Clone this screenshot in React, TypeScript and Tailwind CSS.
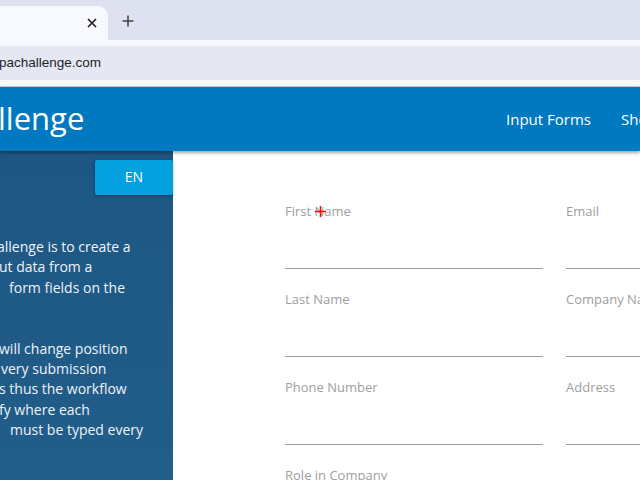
import React from "react";

const font = { fontFamily: '"Open Sans", "Noto Sans", sans-serif' };

function Field({ label }: { label: string }) {
  return (
    <div className="mb-[20px]">
      <div className="h-[20px] text-[13px] leading-[20px] text-[#9e9e9e]">{label}</div>
      <div className="h-[48px] border-b border-[#9e9e9e]" />
    </div>
  );
}

export default function App() {
  return (
    <div className="relative w-[640px] h-[480px] overflow-hidden bg-white" style={font}>
      {/* tab strip */}
      <div className="flex h-[40px] bg-[#dee1ef]">
        <div className="mt-[6px] flex h-[34px] w-[108px] items-center justify-end rounded-tr-[10px] bg-[#f8f9fe] pr-[10px]">
          <svg width="10" height="10" viewBox="0 0 10 10" className="mr-[1px]">
            <path d="M1 1 L9 9 M9 1 L1 9" stroke="#1f1f1f" strokeWidth="1.6" />
          </svg>
        </div>
        <div className="ml-[14px] flex items-center pt-[1px]">
          <svg width="12" height="12" viewBox="0 0 12 12">
            <path d="M6 0.5 V11.5 M0.5 6 H11.5" stroke="#474747" strokeWidth="1.6" />
          </svg>
        </div>
      </div>
      {/* toolbar */}
      <div className="h-[46px] bg-[#f8f9fe] pt-[6px]">
        <div
          className="flex h-[34px] items-center bg-[#e5e7f3] text-[13.5px] text-[#1f1f1f]"
          style={{ fontFamily: '"Liberation Sans", Arial, sans-serif' }}
        >
          <span className="-ml-[1px]">pachallenge.com</span>
        </div>
      </div>
      <div className="h-[1px] bg-[#c9ccd6]" />
      {/* header */}
      <div className="relative z-10 flex h-[64px] items-center bg-[#0079c1] text-white shadow-[0_2px_3px_rgba(0,0,0,0.35)]">
        <div className="-ml-[2px] pb-[2px] text-[31px] leading-none">llenge</div>
        <div className="ml-auto flex items-center text-[15px]">
          <span className="mr-[30px] font-medium">Input Forms</span>
          <span className="-mr-[2px] w-[21px] overflow-hidden whitespace-nowrap font-medium">Show</span>
        </div>
      </div>
      {/* body */}
      <div className="flex h-[329px]">
        <div className="w-[173px] shrink-0 bg-gradient-to-b from-[#1d5683] to-[#225e8b] text-[14px] font-medium leading-[20.4px] text-[#eef3f7]">
          <div className="flex justify-end pt-[9px]">
            <div className="flex h-[35px] w-[78px] items-center justify-center rounded-[2px] bg-[#02a0dd] text-[14px] font-medium text-white shadow-[0_1px_3px_rgba(0,0,0,0.35)]">
              EN
            </div>
          </div>
          <div className="mt-[42px] whitespace-nowrap">
            <div className="-ml-[3px]">allenge is to create a</div>
            <div className="-ml-[1px]">ut data from a</div>
            <div className="ml-[9px]">form fields on the</div>
            <div className="h-[20.4px]" />
            <div className="mt-[20px] -ml-[1px]">will change position</div>
            <div className="ml-[1px]">very submission</div>
            <div className="-ml-[1px]">s thus the workflow</div>
            <div className="-ml-[1px]">fy where each</div>
            <div className="ml-[10px]">must be typed every</div>
          </div>
        </div>
        <div className="flex flex-1 gap-[23px] pl-[112px] pt-[50px]">
          <div className="w-[258px] shrink-0">
            <Field label="First Name" />
            <Field label="Last Name" />
            <Field label="Phone Number" />
            <Field label="Role in Company" />
          </div>
          <div className="w-[258px] shrink-0">
            <Field label="Email" />
            <Field label="Company Name" />
            <Field label="Address" />
          </div>
        </div>
      </div>
      {/* cursor marker */}
      <svg className="absolute left-[315px] top-[206px]" width="11" height="11" viewBox="0 0 11 11">
        <path d="M5.5 0 V11 M0 5.5 H11" stroke="#ff0000" strokeWidth="1.5" />
      </svg>
    </div>
  );
}
